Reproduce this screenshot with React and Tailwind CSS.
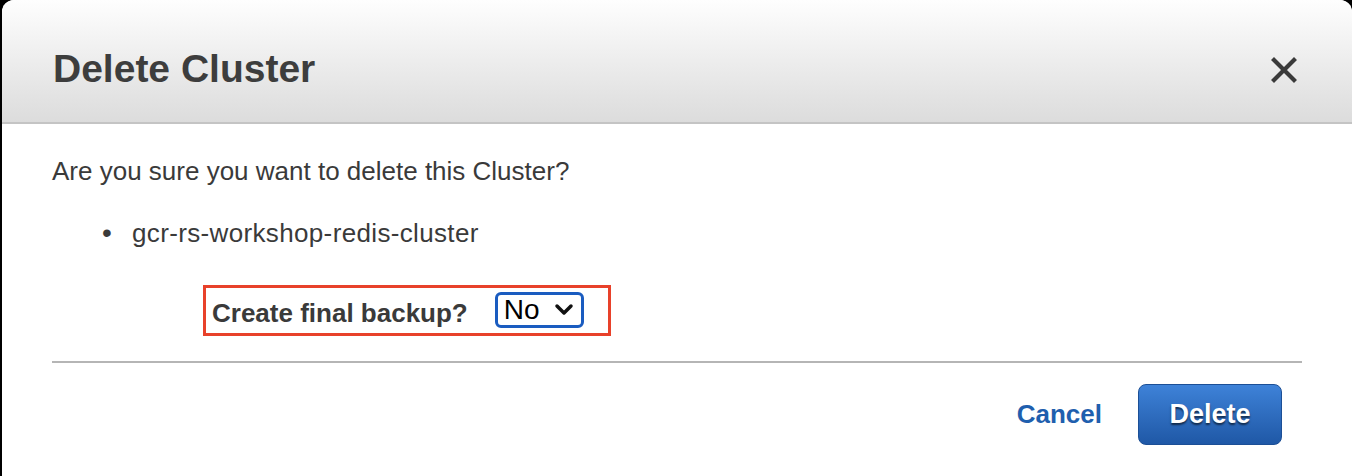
export default function App() {
    return (
        <div className="w-[1352px] h-[476px] bg-black overflow-hidden font-['Liberation_Sans',Arial,sans-serif]">
            <div className="ml-[2px] w-[1350px] h-[476px] bg-white rounded-t-[12px] overflow-hidden flex flex-col">
                {/* header */}
                <div className="h-[124px] shrink-0 bg-gradient-to-b from-[#fefefe] to-[#dcdcdc] border-b-2 border-[#c4c4c4] flex items-start justify-between pl-[51px] pr-[54px]">
                    <h1 className="pt-[49px] text-[39px] leading-[39px] font-bold text-[#3d3d3d]">Delete Cluster</h1>
                    <button className="mt-[56px] w-[28px] h-[28px] flex items-center justify-center">
                        <svg width="26" height="26" viewBox="0 0 26 26">
                            <path d="M3 3 L23 23 M23 3 L3 23" stroke="#3a3a3a" strokeWidth="4.2" strokeLinecap="square" />
                        </svg>
                    </button>
                </div>

                {/* body */}
                <div className="pl-[50px] pr-[50px] pt-[34px]">
                    <p className="text-[26px] leading-[26px] text-[#3a3a3a]">Are you sure you want to delete this Cluster?</p>
                    <ul className="mt-[36px] pl-[50px] text-[26px] leading-[26px] text-[#3a3a3a]">
                        <li className="flex items-center">
                            <span className="w-[30px] text-[28px]">•</span>
                            <span className="tracking-[0.35px]">gcr-rs-workshop-redis-cluster</span>
                        </li>
                    </ul>

                    <div className="mt-[39px] ml-[151px] w-[408px] h-[51px] border-[3px] border-[#e8412a] flex items-center pl-[6px]">
                        <span className="text-[26px] leading-[26px] font-bold text-[#3a3a3a] mt-[4px]">Create final backup?</span>
                        <div className="ml-[27px] mb-[2px] w-[89px] h-[36px] border-[3px] border-[#1a5cc0] rounded-[6px] flex items-center pl-[6px] gap-[14px]">
                            <span className="text-[28px] leading-[28px] text-black">No</span>
                            <svg width="20" height="14" viewBox="0 0 20 14">
                                <path d="M3 3 L10 10 L17 3" fill="none" stroke="#111" strokeWidth="3.5" strokeLinecap="round" strokeLinejoin="round" />
                            </svg>
                        </div>
                    </div>

                    <div className="mt-[25px] h-[2px] bg-[#b5b5b5]" />

                    <div className="flex items-center justify-end pr-[20px] mt-[21px]">
                        <button className="text-[26px] font-bold text-[#1f5fae] mr-[36px]">Cancel</button>
                        <button className="w-[144px] h-[61px] rounded-[8px] border border-[#1c4f96] bg-gradient-to-b from-[#3e82d8] to-[#1f58a6] text-white text-[27px] font-bold [text-shadow:0_2px_2px_rgba(0,0,0,0.6)]">
                            Delete
                        </button>
                    </div>
                </div>
            </div>
        </div>
    );
}
